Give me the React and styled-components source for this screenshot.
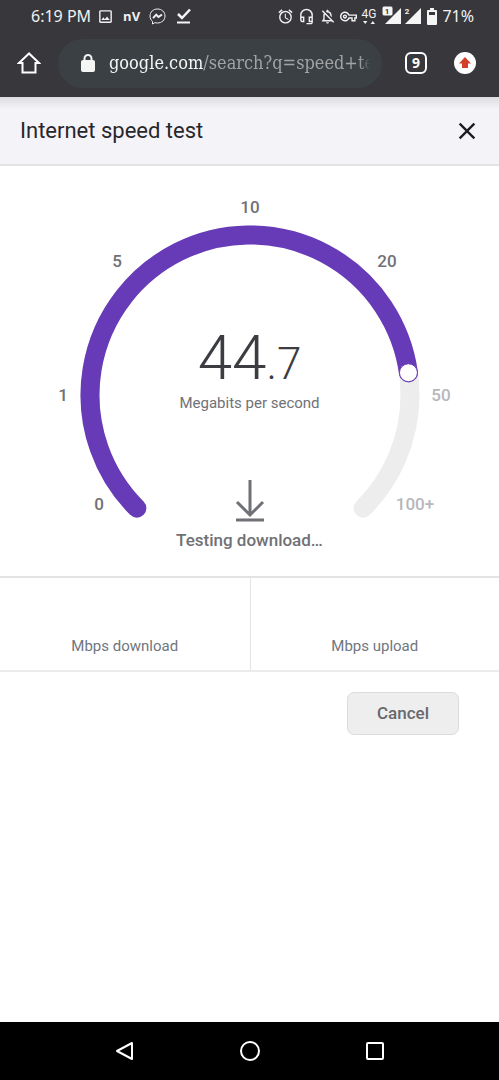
import React from "react";
import styled, { createGlobalStyle } from "styled-components";
import {
  MdAlarm,
  MdClose,
  MdOutlineHeadsetMic,
  MdOutlineImage,
  MdOutlineNotificationsOff,
  MdOutlineVpnKey,
} from "react-icons/md";

const GlobalStyle = createGlobalStyle`
  * {
    box-sizing: border-box;
  }
  body {
    margin: 0;
    background-color: #fff;
    font-family: Roboto, "Liberation Sans", sans-serif;
  }
  button {
    font-family: inherit;
    cursor: pointer;
  }
`;

const Screen = styled.div`
  display: flex;
  flex-direction: column;
  min-height: 100vh;
`;

/* Phone status bar */
const StatusBar = styled.div`
  display: flex;
  align-items: center;
  justify-content: space-between;
  height: 32px;
  padding: 0 25px 0 31px;
  background-color: #38373c;
  color: #f1f1f1;
  font-family: "Noto Sans", sans-serif;
  font-size: 16px;
  line-height: 32px;
`;
const StatusGroup = styled.div`
  display: flex;
  align-items: center;
  gap: ${(props) => props.$gap};
  & svg {
    display: block;
    flex: none;
  }
`;
const StatusTag = styled.span`
  font-family: "Open Sans", sans-serif;
  font-size: 13px;
  font-weight: 700;
`;

/* Browser toolbar */
const Toolbar = styled.header`
  display: flex;
  align-items: center;
  height: 65px;
  padding: 0 20px 3px 15px;
  background-color: #38373c;
`;
const ToolButton = styled.button`
  display: flex;
  align-items: center;
  justify-content: center;
  flex: none;
  width: 28px;
  height: 28px;
  padding: 0;
  border: none;
  background: none;
  color: #fff;
  margin-left: ${(props) => props.$left || "0"};
`;
const AddressBar = styled.button`
  display: flex;
  flex: 1;
  align-items: center;
  gap: 14px;
  min-width: 0;
  height: 49px;
  margin-left: 15px;
  padding: 0 12px 0 23px;
  border: none;
  border-radius: 25px;
  background-color: #3a4043;
  color: #f5f5f5;
  & svg {
    flex: none;
  }
`;
const Url = styled.span`
  flex: 1;
  overflow: hidden;
  white-space: nowrap;
  text-align: left;
  font-family: "DejaVu Serif Condensed", "Liberation Serif", serif;
  font-size: 18px;
  line-height: 28px;
  mask-image: linear-gradient(to right, #000 96%, transparent);
`;
const UrlPath = styled.span`
  color: #a2a3a5;
`;
const TabCount = styled.span`
  display: flex;
  align-items: center;
  justify-content: center;
  width: 22px;
  height: 22px;
  border: 2px solid #fff;
  border-radius: 6px;
  font-family: "Noto Sans", sans-serif;
  font-size: 14px;
  line-height: 18px;
  font-weight: 700;
`;

/* Speed test dialog */
const Content = styled.main`
  display: flex;
  flex: 1;
  flex-direction: column;
`;
const TitleBar = styled.div`
  display: flex;
  align-items: center;
  justify-content: space-between;
  height: 69px;
  padding: 0 18px 0 20px;
  border-bottom: 2px solid #e3e3e5;
  background: linear-gradient(#dddde0, #f4f3f8 12px);
  & h1 {
    margin: 0;
    color: #28272b;
    font-size: 22px;
    line-height: 28px;
    font-weight: 400;
  }
  & button {
    width: 28px;
    height: 28px;
    padding: 0;
    border: none;
    background: none;
    color: #1d1d1f;
  }
  & svg {
    display: block;
  }
`;
const GaugePanel = styled.section`
  display: grid;
  justify-items: center;
  padding: 24px 0;
`;
const Dial = styled.svg`
  grid-area: 1 / 1;
  width: 421px;
  height: 356px;
  & text {
    fill: #707176;
    font-size: 17px;
    font-weight: 500;
    text-anchor: middle;
  }
  & text.ahead {
    fill: #b6b7ba;
  }
`;
const Readout = styled.div`
  grid-area: 1 / 1;
  display: flex;
  flex-direction: column;
  align-items: center;
  padding-top: 139px;
  color: #707176;
`;
const Speed = styled.div`
  color: #3c3d40;
  font-size: 62px;
  line-height: 58px;
  font-weight: 300;
  & small {
    font-size: 44px;
  }
`;
const Unit = styled.div`
  font-size: 15px;
  line-height: 20px;
`;
const DownloadIcon = styled.svg`
  width: 30px;
  height: 44px;
  margin-top: 66px;
`;
const Status = styled.div`
  margin-top: 5px;
  font-size: 17px;
  line-height: 24px;
  font-weight: 500;
`;
const Results = styled.section`
  display: grid;
  grid-template-columns: 1fr 1fr;
  border-top: 2px solid #e3e3e5;
  border-bottom: 2px solid #ebebed;
`;
const Result = styled.div`
  display: flex;
  align-items: flex-end;
  justify-content: center;
  height: 92px;
  padding-bottom: 14px;
  color: #707680;
  font-size: 15px;
  line-height: 20px;
  & + & {
    border-left: 1px solid #e3e3e5;
  }
`;
const Actions = styled.div`
  display: flex;
  justify-content: flex-end;
  padding: 20px 40px;
`;
const CancelButton = styled.button`
  height: 43px;
  padding: 0 29px 2px;
  border: 1px solid #dcdcde;
  border-radius: 7px;
  background-color: #eeeeef;
  color: #67686c;
  font-size: 17px;
  line-height: 24px;
  font-weight: 500;
`;

/* Android navigation */
const NavBar = styled.nav`
  display: flex;
  align-items: center;
  justify-content: space-around;
  height: 58px;
  padding: 0 62px;
  background-color: #000;
`;

const CENTER_X = 211;
const CENTER_Y = 205;
const RADIUS = 160;

const marks = [
  { label: "0", x: 60, y: 320 },
  { label: "1", x: 24, y: 211 },
  { label: "5", x: 78, y: 77 },
  { label: "10", x: 211, y: 23 },
  { label: "20", x: 348, y: 77 },
  { label: "50", x: 402, y: 211, ahead: true },
  { label: "100+", x: 376, y: 320, ahead: true },
];

// degrees are clockwise from three o'clock
function point(degrees) {
  const angle = (degrees * Math.PI) / 180;
  return [
    CENTER_X + RADIUS * Math.cos(angle),
    CENTER_Y + RADIUS * Math.sin(angle),
  ];
}

function arc(from, to) {
  const large = to - from > 180 ? 1 : 0;
  return `M${point(from)} A${RADIUS} ${RADIUS} 0 ${large} 1 ${point(to)}`;
}

function Gauge() {
  const [knobX, knobY] = point(352);
  return (
    <Dial viewBox="0 0 421 356" role="img" aria-label="Speed gauge">
      <g fill="none" strokeWidth="19" strokeLinecap="round">
        <path d={arc(135, 405)} stroke="#ededed" />
        <path d={arc(135, 352)} stroke="#673ab7" />
      </g>
      <circle
        cx={knobX}
        cy={knobY}
        r="9"
        fill="#fff"
        stroke="#673ab7"
        strokeWidth="1"
      />
      {marks.map((mark) => (
        <text
          key={mark.label}
          x={mark.x}
          y={mark.y}
          className={mark.ahead ? "ahead" : undefined}
        >
          {mark.label}
        </text>
      ))}
    </Dial>
  );
}

function MessengerIcon() {
  return (
    <svg width="17" height="17" viewBox="0 0 17 17" fill="none" stroke="#f1f1f1">
      <path d="M8.5 1C4.200 1 1 4 1 8c0 2.200.9 4 2.500 5.400V16l2.300-1.300c.8.200 1.700.3 2.700.3 4.300 0 7.500-3 7.500-7s-3.200-7-7.500-7z" />
      <path d="M4 10.200l3.200-3.500L9.500 9l3.500-2.500" strokeWidth="2" />
    </svg>
  );
}

function DoneIcon() {
  return (
    <svg width="17" height="17" viewBox="0 0 17 17" fill="none" stroke="#f5f5f5">
      <path d="M3 6l4 4 8-8.500" strokeWidth="2.500" />
      <path d="M2 14.500h13" strokeWidth="2" />
    </svg>
  );
}

function NetworkIcon() {
  return (
    <svg width="16" height="20" viewBox="0 0 16 20" fill="#f1f1f1">
      <text x="8" y="12" fontSize="12" fontFamily="Roboto" textAnchor="middle">
        4G
      </text>
      <path d="M2 15h4.400L4.200 18zM9.600 18h4.400L11.800 15z" />
    </svg>
  );
}

function SignalIcon({ sim, boxed }) {
  return (
    <svg width="20" height="20" viewBox="0 0 20 20">
      <path d="M19 2v16H3z" fill="#f5f5f5" />
      {boxed && (
        <rect
          x="0"
          y="0"
          width="11"
          height="10"
          rx="2"
          fill="#f5f5f5"
          stroke="#38373c"
          strokeWidth="1"
        />
      )}
      <text
        x="5"
        y="8"
        fontSize="8"
        fontWeight="700"
        fontFamily="Roboto"
        textAnchor="middle"
        fill={boxed ? "#38373c" : "#f5f5f5"}
      >
        {sim}
      </text>
    </svg>
  );
}

function BatteryIcon() {
  return (
    <svg width="10" height="17" viewBox="0 0 10 17">
      <path
        d="M3 0h4v2h2q1 0 1 1v13q0 1-1 1H1q-1 0-1-1V3q0-1 1-1h2zM2 4v3h6V4z"
        fill="#f5f5f5"
        fillRule="evenodd"
      />
    </svg>
  );
}

function App() {
  return (
    <Screen>
      <GlobalStyle />
      <StatusBar>
        <StatusGroup $gap="9px">
          <StatusGroup $gap="6px">
            <span>6:19 PM</span>
            <MdOutlineImage size={17} />
          </StatusGroup>
          <StatusTag>nV</StatusTag>
          <MessengerIcon />
          <DoneIcon />
        </StatusGroup>
        <StatusGroup $gap="5px">
          <StatusGroup $gap="4px">
            <MdAlarm size={17} />
            <MdOutlineHeadsetMic size={17} />
            <MdOutlineNotificationsOff size={17} />
            <MdOutlineVpnKey size={17} />
            <NetworkIcon />
          </StatusGroup>
          <StatusGroup $gap="0px">
            <SignalIcon sim="1" boxed />
            <SignalIcon sim="2" />
          </StatusGroup>
          <BatteryIcon />
          <span>71%</span>
        </StatusGroup>
      </StatusBar>

      <Toolbar>
        <ToolButton aria-label="Home">
          <svg width="24" height="24" viewBox="0 0 24 24" fill="none">
            <path
              d="M12 2.500L2 12h3.500v9.500h13V12H22z"
              stroke="currentColor"
              strokeWidth="2"
            />
          </svg>
        </ToolButton>
        <AddressBar>
          <svg width="14" height="18" viewBox="0 0 14 18">
            <path
              d="M3.500 7V4.500a3.500 3.500 0 0 1 7 0V7"
              fill="none"
              stroke="currentColor"
              strokeWidth="2"
            />
            <rect y="6" width="14" height="12" rx="2" fill="currentColor" />
          </svg>
          <Url>
            google.com<UrlPath>/search?q=speed+test</UrlPath>
          </Url>
        </AddressBar>
        <ToolButton $left="20px" aria-label="Open tabs">
          <TabCount>9</TabCount>
        </ToolButton>
        <ToolButton $left="21px" aria-label="Update available">
          <svg width="22" height="22" viewBox="0 0 22 22">
            <circle cx="11" cy="11" r="11" fill="#fff" />
            <path d="M11 5l6 6.500h-3V16H8v-4.500H5z" fill="#d2402a" />
          </svg>
        </ToolButton>
      </Toolbar>

      <Content>
        <TitleBar>
          <h1>Internet speed test</h1>
          <button aria-label="Close">
            <MdClose size={28} />
          </button>
        </TitleBar>
        <GaugePanel>
          <Gauge />
          <Readout>
            <Speed>
              44<small>.7</small>
            </Speed>
            <Unit>Megabits per second</Unit>
            <DownloadIcon viewBox="0 0 30 44">
              <path
                d="M15 1v34M2 23l13 13 13-13M1 41h28"
                fill="none"
                stroke="#707176"
                strokeWidth="3"
              />
            </DownloadIcon>
            <Status>Testing download…</Status>
          </Readout>
        </GaugePanel>
        <Results>
          <Result>Mbps download</Result>
          <Result>Mbps upload</Result>
        </Results>
        <Actions>
          <CancelButton>Cancel</CancelButton>
        </Actions>
      </Content>

      <NavBar>
        <ToolButton aria-label="Back">
          <svg width="20" height="20" viewBox="0 0 20 20" fill="none">
            <path
              d="M17 2v16L2 10z"
              stroke="currentColor"
              strokeWidth="2"
              strokeLinejoin="round"
            />
          </svg>
        </ToolButton>
        <ToolButton aria-label="Home screen">
          <svg width="20" height="20" viewBox="0 0 20 20" fill="none">
            <circle cx="10" cy="10" r="9" stroke="currentColor" strokeWidth="2" />
          </svg>
        </ToolButton>
        <ToolButton aria-label="Recent apps">
          <svg width="18" height="18" viewBox="0 0 18 18" fill="none">
            <rect
              x="1"
              y="1"
              width="16"
              height="16"
              rx="1"
              stroke="currentColor"
              strokeWidth="2"
            />
          </svg>
        </ToolButton>
      </NavBar>
    </Screen>
  );
}

export default App;
